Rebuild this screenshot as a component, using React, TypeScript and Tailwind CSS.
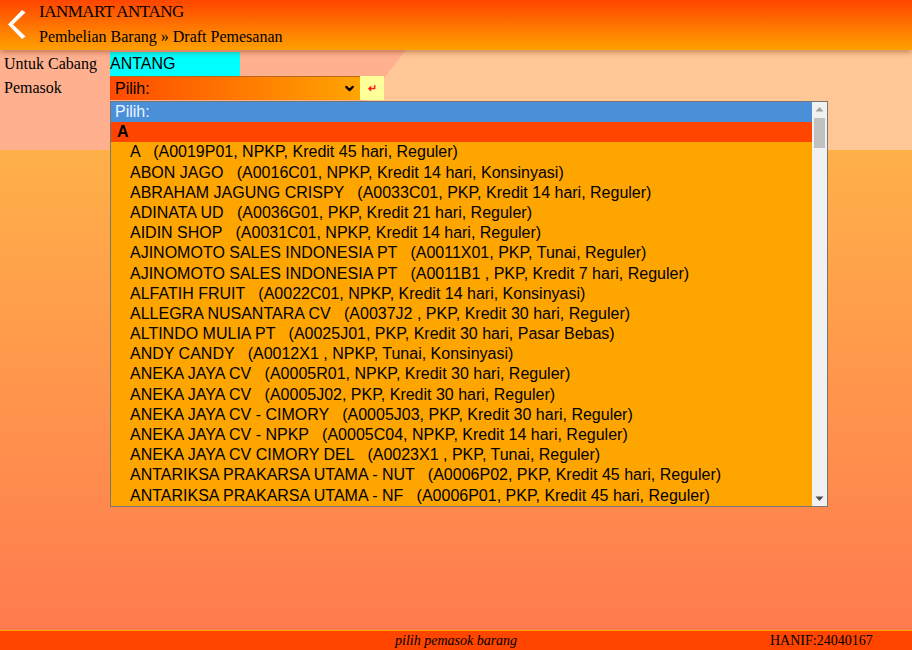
import { ChevronDown } from 'lucide-react'

const suppliers = [
  ['A', 'A0019P01, NPKP, Kredit 45 hari, Reguler'],
  ['ABON JAGO', 'A0016C01, NPKP, Kredit 14 hari, Konsinyasi'],
  ['ABRAHAM JAGUNG CRISPY', 'A0033C01, PKP, Kredit 14 hari, Reguler'],
  ['ADINATA UD', 'A0036G01, PKP, Kredit 21 hari, Reguler'],
  ['AIDIN SHOP', 'A0031C01, NPKP, Kredit 14 hari, Reguler'],
  ['AJINOMOTO SALES INDONESIA PT', 'A0011X01, PKP, Tunai, Reguler'],
  ['AJINOMOTO SALES INDONESIA PT', 'A0011B1 , PKP, Kredit 7 hari, Reguler'],
  ['ALFATIH FRUIT', 'A0022C01, NPKP, Kredit 14 hari, Konsinyasi'],
  ['ALLEGRA NUSANTARA CV', 'A0037J2 , PKP, Kredit 30 hari, Reguler'],
  ['ALTINDO MULIA PT', 'A0025J01, PKP, Kredit 30 hari, Pasar Bebas'],
  ['ANDY CANDY', 'A0012X1 , NPKP, Tunai, Konsinyasi'],
  ['ANEKA JAYA CV', 'A0005R01, NPKP, Kredit 30 hari, Reguler'],
  ['ANEKA JAYA CV', 'A0005J02, PKP, Kredit 30 hari, Reguler'],
  ['ANEKA JAYA CV - CIMORY', 'A0005J03, PKP, Kredit 30 hari, Reguler'],
  ['ANEKA JAYA CV - NPKP', 'A0005C04, NPKP, Kredit 14 hari, Reguler'],
  ['ANEKA JAYA CV CIMORY DEL', 'A0023X1 , PKP, Tunai, Reguler'],
  ['ANTARIKSA PRAKARSA UTAMA - NUT', 'A0006P02, PKP, Kredit 45 hari, Reguler'],
  ['ANTARIKSA PRAKARSA UTAMA - NF', 'A0006P01, PKP, Kredit 45 hari, Reguler'],
]

export default function App() {
  return (
    <div className="relative flex h-[650px] w-[912px] flex-col overflow-hidden font-['Liberation_Serif',serif] text-black">
      {/* header */}
      <div className="relative z-10 flex h-[50px] items-stretch bg-[linear-gradient(to_bottom,#ff4500,#ffa000)] shadow-[0_2px_6px_rgba(120,40,0,0.45)]">
        <svg viewBox="0 0 39 50" className="h-[50px] w-[39px] shrink-0">
          <polygon points="22,10 25.5,12.5 13,24.5 25.5,36.5 22,39 8,24.5" fill="#fff" />
        </svg>
        <div className="flex flex-col pt-[1px]">
          <div className="text-[17px] leading-[22px] tracking-[-0.5px]">IANMART ANTANG</div>
          <div className="mt-[3px] text-[16px] leading-[22px]">Pembelian Barang » Draft Pemesanan</div>
        </div>
      </div>

      {/* form */}
      <div className="h-[100px] bg-[linear-gradient(128deg,#ffb18f_41%,#ffc796_41%)] pt-[1px] text-[16px]">
        <div className="flex h-[25px] items-center">
          <div className="w-[110px] pl-[4px] leading-[24px]">Untuk Cabang</div>
          <div className="flex h-[24px] w-[130px] items-center bg-[#00ffff] font-['Liberation_Sans',sans-serif] leading-[24px]">
            ANTANG
          </div>
        </div>
        <div className="flex h-[24px] items-center">
          <div className="w-[110px] pl-[4px] leading-[24px]">Pemasok</div>
          <div className="flex h-[24px] w-[250px] items-center justify-between border-t border-[#b86a1a] bg-[linear-gradient(to_right,#ff4a00,#ffa500)] pl-[5px] pr-[4px] font-['Liberation_Sans',sans-serif]">
            <span>Pilih:</span>
            <ChevronDown size={13} strokeWidth={4} className="text-black" />
          </div>
          <div className="flex h-[24px] w-[24px] items-center justify-center bg-[#ffff99] text-[11px] font-bold text-[#ff1a1a]">
            ↵
          </div>
        </div>
      </div>

      {/* body */}
      <div className="flex-1 bg-[linear-gradient(to_bottom,#ffb049,#ff7b4f)]" />

      {/* footer */}
      <div className="flex h-[20px] items-center border-t border-[#ffa500] bg-[#ff4500] text-[14px]">
        <div className="w-[395px]" />
        <div className="w-[375px] italic">pilih pemasok barang</div>
        <div>HANIF:24040167</div>
      </div>

      {/* open select list */}
      <div className="absolute left-[110px] top-[101px] z-20 flex h-[406px] w-[718px] border border-[#767676] font-['Liberation_Sans',sans-serif] text-[16px]">
        <div className="flex-1 overflow-hidden bg-[#ffa500]">
          <div className="h-[20.2px] bg-[#4a90d9] pl-[4px] leading-[20px] text-[#eef4ff]">Pilih:</div>
          <div className="h-[20.2px] bg-[#ff4500] pl-[6px] font-bold leading-[20px]">A</div>
          {suppliers.map(([name, info], i) => (
            <div key={i} className="h-[20.2px] whitespace-pre pl-[19px] leading-[20px]">
              {name}
              {'   '}({info})
            </div>
          ))}
        </div>
        <div className="flex w-[15px] flex-col items-center bg-[#f1f1f1]">
          <svg viewBox="0 0 15 15" className="h-[15px] w-[15px]">
            <polygon points="3.5,9.5 11.5,9.5 7.5,5" fill="#a3a3a3" />
          </svg>
          <div className="mt-[1px] h-[30px] w-[11px] bg-[#c1c1c1]" />
          <div className="flex-1" />
          <svg viewBox="0 0 15 15" className="h-[15px] w-[15px]">
            <polygon points="3.5,5.5 11.5,5.5 7.5,10" fill="#505050" />
          </svg>
        </div>
      </div>
    </div>
  )
}
